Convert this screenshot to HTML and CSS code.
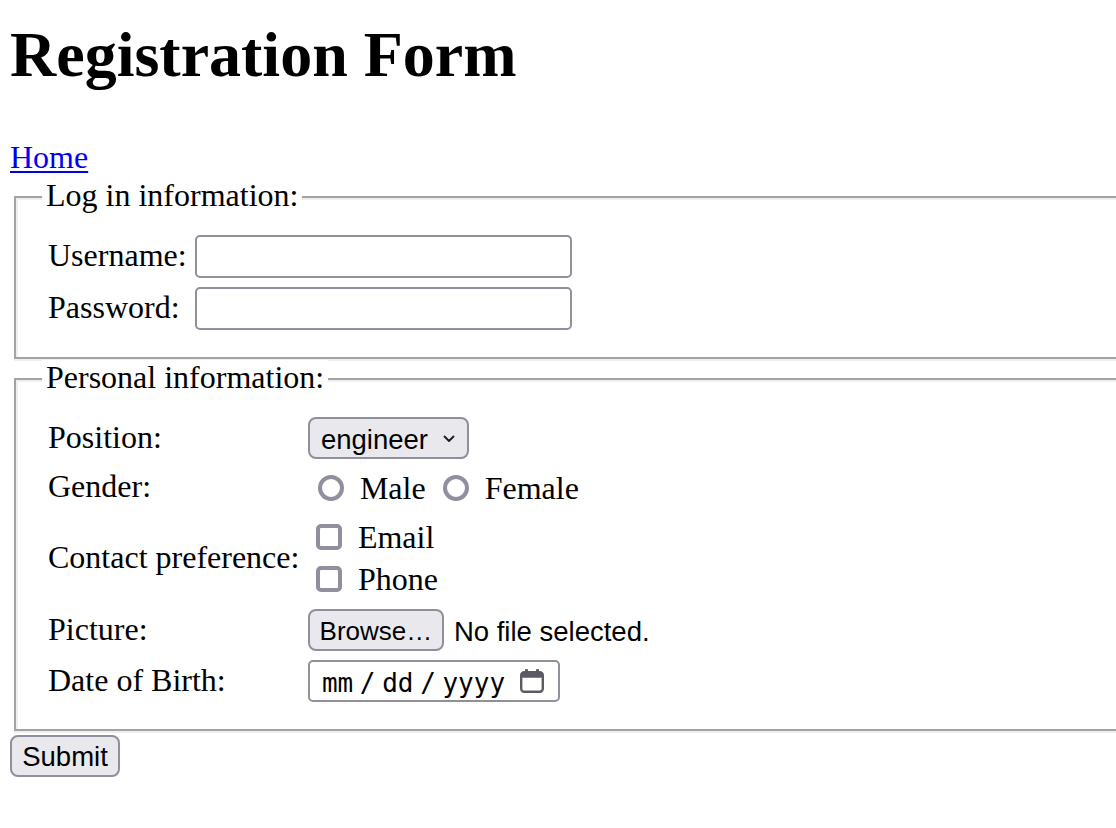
FILE: index.html
```html
<!DOCTYPE html>
<html lang="en">
<head>
<meta charset="utf-8">
<title>Registration Form</title>
<link rel="stylesheet" href="styles.css">
</head>
<body>
<h1 class="page-title">Registration Form</h1>
<div class="nav"><a class="nav-link" href="#">Home</a></div>
<form class="reg-form">
  <fieldset class="group group-login">
    <legend class="group-legend">Log in information:</legend>
    <div class="field-grid">
      <label class="field-label" for="username">Username:</label>
      <input class="text-input" id="username" type="text">
      <label class="field-label" for="password">Password:</label>
      <input class="text-input" id="password" type="password">
    </div>
  </fieldset>
  <fieldset class="group group-personal">
    <legend class="group-legend">Personal information:</legend>
    <div class="field-grid">
      <label class="field-label">Position:</label>
      <div class="control row-select">
        <div class="select-box">
          <span class="select-value">engineer</span>
          <svg class="chevron" width="12" height="8" viewBox="0 0 12 8" aria-hidden="true"><path d="M1.5 1.5 L6 6 L10.5 1.5" fill="none" stroke="#1b1b1f" stroke-width="1.8" stroke-linecap="round" stroke-linejoin="round"/></svg>
        </div>
      </div>
      <label class="field-label">Gender:</label>
      <div class="control row-radio">
        <input class="radio" type="radio" name="gender"><span class="opt-text">Male</span>
        <input class="radio radio-next" type="radio" name="gender"><span class="opt-text">Female</span>
      </div>
      <label class="field-label">Contact preference:</label>
      <div class="control row-check">
        <div class="check-line"><input class="check" type="checkbox"><span class="opt-text">Email</span></div>
        <div class="check-line"><input class="check" type="checkbox"><span class="opt-text">Phone</span></div>
      </div>
      <label class="field-label">Picture:</label>
      <div class="control row-file">
        <span class="btn btn-browse">Browse…</span><span class="file-status">No file selected.</span>
      </div>
      <label class="field-label">Date of Birth:</label>
      <div class="control row-date">
        <div class="date-box">
          <span class="date-text">mm / dd / yyyy</span>
          <svg class="cal-icon" width="26" height="24" viewBox="0 0 26 24" aria-hidden="true">
            <rect x="6" y="0" width="3" height="5" rx="1" fill="#5b5b66"/>
            <rect x="17" y="0" width="3" height="5" rx="1" fill="#5b5b66"/>
            <rect x="2.2" y="3.2" width="21.6" height="19.6" rx="3" fill="none" stroke="#5b5b66" stroke-width="2.4"/>
            <rect x="2.2" y="3.2" width="21.6" height="5.5" rx="2" fill="#5b5b66"/>
          </svg>
        </div>
      </div>
    </div>
  </fieldset>
  <button class="btn btn-submit" type="submit">Submit</button>
</form>
</body>
</html>
```

FILE: styles.css
```css
html, body {
  overflow: hidden;
}

body {
  margin: 0;
  padding: 0 0 0 10px;
  background: #ffffff;
  color: #000000;
  font-family: "Liberation Serif", "Times New Roman", serif;
  font-size: 32px;
  line-height: 37px;
}

.page-title {
  margin: 18px 0 47px;
  font-size: 64px;
  line-height: 74px;
  font-weight: bold;
}

.nav {
  line-height: 37px;
  height: 36px;
}

.nav-link {
  color: #0000ee;
  text-decoration: underline;
  text-decoration-thickness: 2px;
  text-underline-offset: 3px;
}

.reg-form {
  margin: 0;
}

.group {
  min-width: 0;
  margin: 1px -40px 0 4px;
  padding: 19px 26px 27px;
  border: 2px solid #a3a3a3;
  box-shadow: inset 2px 2px 0 #efefef, 0 2px 0 #efefef;
}

.group-login {
  margin-top: 3px;
}

.group-legend {
  padding: 3px 4px 7px;
  line-height: 28px;
  background: #ffffff;
}

.field-grid {
  display: grid;
  grid-template-columns: max-content max-content;
  column-gap: 8.5px;
  row-gap: 9px;
  align-items: center;
  padding-left: 6px;
}

.field-label {
  line-height: 31px;
  padding-bottom: 2px;
}

.text-input {
  box-sizing: border-box;
  width: 377px;
  height: 43px;
  margin: 0;
  padding: 0 8px;
  border: 2px solid #8f8f9d;
  border-radius: 5px;
  background: #ffffff;
  font-family: "Liberation Sans", Arial, sans-serif;
  font-size: 27.5px;
  outline: none;
}

.control {
  display: flex;
  align-items: center;
  font-family: "Liberation Sans", Arial, sans-serif;
  font-size: 27.5px;
  line-height: 31px;
}

.select-box {
  box-sizing: border-box;
  width: 161px;
  height: 42px;
  display: flex;
  align-items: center;
  justify-content: space-between;
  padding: 2px 12px 0 11px;
  border: 2px solid #8f8f9d;
  border-radius: 8px;
  background: #e9e9ed;
}

.chevron {
  display: block;
}

.row-radio {
  height: 39px;
  font-family: "Liberation Serif", "Times New Roman", serif;
  font-size: 32px;
  line-height: 37px;
}

.radio,
.check {
  appearance: none;
  -webkit-appearance: none;
  box-sizing: border-box;
  width: 26px;
  height: 26px;
  margin: 0;
  border: 4px solid #8f8f9d;
  background: #ffffff;
  flex: none;
}

.radio {
  border-radius: 50%;
  margin: 0 16px 0 10px;
}

.radio-next {
  margin-left: 17px;
}

.row-radio .opt-text {
  padding-top: 2px;
}

.row-check {
  flex-direction: column;
  align-items: flex-start;
  font-family: "Liberation Serif", "Times New Roman", serif;
  font-size: 32px;
  line-height: 37px;
}

.check-line {
  height: 42px;
  display: flex;
  align-items: center;
}

.check {
  border-radius: 5px;
  margin: 0 16px 0 8px;
}

.btn {
  box-sizing: border-box;
  display: flex;
  align-items: center;
  justify-content: center;
  height: 42px;
  margin: 0;
  padding: 0;
  border: 2px solid #8f8f9d;
  border-radius: 8px;
  background: #e9e9ed;
  color: #000000;
  font-family: "Liberation Sans", Arial, sans-serif;
  font-size: 27.5px;
  line-height: 31px;
}

.btn-browse {
  width: 136px;
  font-size: 26px;
  padding-top: 2px;
}

.file-status {
  margin-left: 10px;
  padding-top: 2px;
}

.date-box {
  box-sizing: border-box;
  width: 252px;
  height: 42px;
  display: flex;
  align-items: center;
  justify-content: space-between;
  padding: 0 13px 0 12px;
  border: 2px solid #8f8f9d;
  border-radius: 5px;
  background: #ffffff;
}

.date-text {
  font-family: "DejaVu Sans Mono", "Liberation Mono", monospace;
  font-size: 26px;
  line-height: 31px;
  word-spacing: -9px;
  padding-top: 4px;
  white-space: pre;
}

.cal-icon {
  display: block;
}

.btn-submit {
  width: 110px;
  margin-top: 4px;
}
```
